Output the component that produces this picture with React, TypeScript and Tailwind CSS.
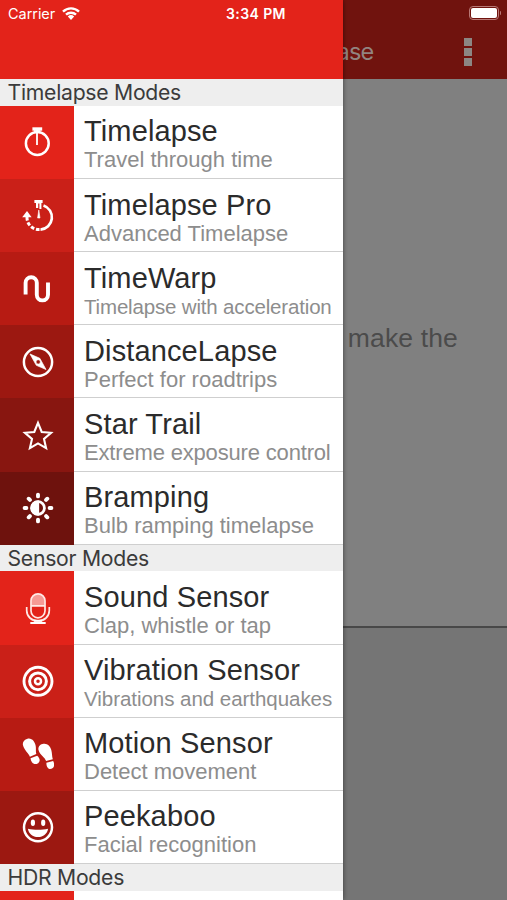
import type { ReactNode } from "react";

type Mode = {
  title: string;
  subtitle: string;
  tile: string;
  subtitleClass?: string;
  icon: ReactNode;
};

function Glyph({ children }: { children: ReactNode }) {
  return (
    <svg viewBox="0 0 32 32" className="size-8" fill="none" stroke="#fff" strokeWidth="2.3">
      {children}
    </svg>
  );
}

const stopwatch = (
  <Glyph>
    <circle cx="15.3" cy="17.5" r="11.4" strokeWidth="2.5" />
    <path d="M15.3 3.5v3M15 7v12" strokeWidth="1.8" />
    <path d="M10.4 1.3h9.8v3.4h-9.8z" fill="#fff" stroke="none" />
    <path d="M12 4.9h6.5" strokeWidth="1.5" />
  </Glyph>
);

const stopwatchPro = (
  <Glyph>
    <path d="M21.5 5.5A12.4 12.4 0 0 1 18.5 29.6" strokeWidth="2.7" />
    <path d="M17.5 29.6A12 12 0 0 1 5 17" strokeWidth="3" strokeDasharray="3.6 1.8" />
    <path d="M.2 17.2 5 11l4.6 6.2z" fill="#fff" stroke="none" />
    <path d="M12.4 0h8.2v3h-1.2v6h-2V3.5h-1.2V8H14V3h-1.6z" fill="#fff" stroke="none" />
    <path d="m16.8 10 1.2 8h-2.4z" fill="#fff" stroke="#fff" strokeWidth=".6" />
  </Glyph>
);

const wave = (
  <Glyph>
    <path d="M3.6 21.5V9.8a5.6 5.6 0 0 1 11.2 0v12a5.6 5.6 0 0 0 11.2 0V9.500" strokeWidth="3.9" />
  </Glyph>
);

const compass = (
  <Glyph>
    <circle cx="16" cy="16" r="14.1" strokeWidth="2.5" />
    <path
      d="m8 8 9.8 4.3L24 23.5l-9.7-4.2zM16.2 13.7a2.2 2.2 0 1 0 0 4.4 2.2 2.2 0 0 0 0-4.4z"
      fill="#fff"
      fillRule="evenodd"
      stroke="#fff"
      strokeWidth=".7"
    />
  </Glyph>
);

const star = (
  <Glyph>
    <path
      d="m16 3.8 3.7 9.2 9.4.8-7.1 6.2 2.1 9.2-8.1-4.8-8.1 4.8L10 20l-7.1-6.2 9.4-.8z"
      strokeWidth="2.1"
    />
  </Glyph>
);

const brightness = (
  <Glyph>
    <circle cx="16" cy="16" r="6.4" strokeWidth="2.8" />
    <path d="M16 9.6a6.4 6.4 0 0 0 0 12.8z" fill="#fff" />
    <path
      d="M16 2.6v1.8M16 27.6v1.8M2.600 16h1.800M27.600 16h1.800M6.700 6.700l1.200 1.200M24.100 24.100l1.200 1.200M6.700 25.300l1.200-1.200M24.100 7.900l1.200-1.200"
      strokeWidth="3.9"
      strokeLinecap="round"
    />
  </Glyph>
);

const microphone = (
  <Glyph>
    <path d="M9.3 14V8.8a6.700 6.700 0 0 1 13.400 0V14z" fill="#f69a95" stroke="none" />
    <rect x="9" y="1.8" width="14" height="24" rx="7" strokeWidth="1.7" stroke="#ffe9e6" />
    <path
      d="M9 13.800h14M4.700 15v3.500c0 6 5 10.500 11.300 10.500s11.300-4.500 11.300-10.500V15"
      strokeWidth="1.7"
      stroke="#ffe9e6"
    />
    <path d="M8.300 31h15.400M12 28.800h8" strokeWidth="2" />
  </Glyph>
);

const target = (
  <Glyph>
    <circle cx="16" cy="16.3" r="14" strokeWidth="2.9" />
    <circle cx="16" cy="16.3" r="8.4" strokeWidth="3" />
    <circle cx="16" cy="16.3" r="3" strokeWidth="2.5" />
  </Glyph>
);

const footprints = (
  <Glyph>
    <g fill="#fff" stroke="none">
      <path d="M5.500.8c4.200-1.200 7.500 3 8.200 7.200.5 3.200-.2 5 .6 8.100l-6.400 2.600C6.400 14.700 2.200 12.200 1 7.200.2 4.400 2.200 1.500 5.500.8z" />
      <path d="m8.500 20.200 6.700-2.400c2.800 2.400 3.300 5.600.9 7.400-3.400 2.200-7 .1-7.600-5z" />
      <path d="M20.500 6c4.300-1.300 7.700 1.800 8.800 6.100.9 3.400.6 6.400 1.500 9.100l-6.700 1.800c-1.200-4-6.200-6-7.500-10.800C15.800 9.300 17.500 6.700 20.500 6z" />
      <path d="m24.400 24.700 6.700-1.600c2 3.400 1 6.900-1.600 7.700-2.700.8-5.300-1.500-5.100-6.100z" />
    </g>
  </Glyph>
);

const smiley = (
  <Glyph>
    <circle cx="16" cy="16.3" r="14" strokeWidth="2.5" />
    <g fill="#fff" stroke="none">
      <ellipse cx="10.9" cy="11.8" rx="2.1" ry="3.2" />
      <ellipse cx="21.2" cy="11.8" rx="2.1" ry="3.2" />
      <path d="M5.900 17.700c6 1.500 14.200 1.500 20.200 0-.8 5-4.800 8.300-10.100 8.300s-9.300-3.300-10.100-8.300z" />
    </g>
  </Glyph>
);

const timelapseModes: Mode[] = [
  { title: "Timelapse", subtitle: "Travel through time", tile: "bg-[#e3231a]", icon: stopwatch },
  { title: "Timelapse Pro", subtitle: "Advanced Timelapse", tile: "bg-[#ca2018]", icon: stopwatchPro },
  {
    title: "TimeWarp",
    subtitle: "Timelapse with acceleration",
    tile: "bg-[#b71b13]",
    subtitleClass: "text-[20.5px] tracking-[-0.17px]",
    icon: wave,
  },
  { title: "DistanceLapse", subtitle: "Perfect for roadtrips", tile: "bg-[#9c1811]", icon: compass },
  {
    title: "Star Trail",
    subtitle: "Extreme exposure control",
    tile: "bg-[#881610]",
    subtitleClass: "text-[22px] tracking-[-0.17px]",
    icon: star,
  },
  { title: "Bramping", subtitle: "Bulb ramping timelapse", tile: "bg-[#6e120d]", icon: brightness },
];

const sensorModes: Mode[] = [
  { title: "Sound Sensor", subtitle: "Clap, whistle or tap", tile: "bg-[#e3231a]", icon: microphone },
  {
    title: "Vibration Sensor",
    subtitle: "Vibrations and earthquakes",
    tile: "bg-[#ca2018]",
    subtitleClass: "text-[20.5px] tracking-[-0.04px]",
    icon: target,
  },
  { title: "Motion Sensor", subtitle: "Detect movement", tile: "bg-[#b71b13]", icon: footprints },
  { title: "Peekaboo", subtitle: "Facial recognition", tile: "bg-[#9c1811]", icon: smiley },
];

function SectionHeader({ children }: { children: ReactNode }) {
  return (
    <h2 className="h-[26.8px] shrink-0 bg-[#eee] pl-[7.5px] font-[Inter,sans-serif] text-[21.2px] leading-[26px] tracking-[-0.27px] text-[#3b3b3b]">
      {children}
    </h2>
  );
}

function ModeRow({ mode }: { mode: Mode }) {
  return (
    <li className="flex h-[73.15px]">
      <div className={`flex w-[74px] shrink-0 items-center justify-center pl-[2px] ${mode.tile}`}>
        {mode.icon}
      </div>
      <div className="flex-1 border-b border-[#cfcfcf] pt-[9.6px] pl-[10px] whitespace-nowrap">
        <div className="h-[32px] text-[29px] leading-[32px] tracking-[0.13px] text-[#2b2b2b]">{mode.title}</div>
        <div className={`h-[25px] leading-[25px] text-[#8d8d8d] ${mode.subtitleClass ?? "text-[22px]"}`}>
          {mode.subtitle}
        </div>
      </div>
    </li>
  );
}

function StatusBar() {
  return (
    <div className="absolute inset-x-0 top-0 flex h-7 items-center font-[Inter,sans-serif] text-white">
      <span className="ml-[8px] w-[54px] text-[14.5px] tracking-[-0.05px]">Carrier</span>
      <svg viewBox="0 0 18 13" className="mb-[2px] h-[13px] w-[18px]" fill="none" stroke="#fff" strokeWidth="2.4">
        <path d="M1 4.600a11.500 11.500 0 0 1 16 0M4 7.700a7.200 7.200 0 0 1 10 0" />
        <path d="m5.800 9.600 3.200 3.300 3.200-3.300a4.700 4.700 0 0 0-6.400 0z" fill="#fff" stroke="none" />
      </svg>
      <span className="mb-px ml-[146px] text-[14px] font-semibold tracking-[0.4px]">3:34 PM</span>
      <div className="mr-[6px] mb-[2px] ml-auto flex items-center gap-px">
        <div className="h-[14px] w-[30px] rounded-[4px] border border-[#b87875] p-px">
          <div className="h-full rounded-[2px] bg-white" />
        </div>
        <div className="h-[4px] w-[1.5px] rounded-r bg-[#b87875]" />
      </div>
    </div>
  );
}

export default function App() {
  return (
    <div className="relative h-[900px] w-full overflow-hidden bg-[#808080] font-['Liberation_Sans',Arial,sans-serif]">
      <main className="flex h-full flex-col">
        <header className="flex h-[79px] shrink-0 items-end justify-end bg-[#70130e] pr-[35.5px] pb-[13px] font-[Inter,sans-serif] text-[#928480]">
          <span className="mr-[90px] text-[23.5px] leading-[28px] tracking-[-0.8px]">ase</span>
          <div className="flex flex-col gap-[2px]">
            <i className="size-2 bg-[#8c8683]" />
            <i className="size-2 bg-[#8c8683]" />
            <i className="size-2 bg-[#8c8683]" />
          </div>
        </header>
        <section className="flex h-[549px] shrink-0 items-start justify-end border-b-2 border-[#484848] pt-[244px] pr-[49px]">
          <p className="text-[26.5px] leading-[30px] tracking-[0.15px] text-[#4b4b4b]">make the</p>
        </section>
        <section className="flex-1 bg-[#757575]" />
      </main>

      <aside className="absolute inset-y-0 left-0 flex w-[343px] flex-col bg-white shadow-[0_0_5px_rgba(0,0,0,0.5)]">
        <div className="h-[79px] shrink-0 bg-[#e3231a]" />
        <SectionHeader>Timelapse Modes</SectionHeader>
        <ul>
          {timelapseModes.map((mode) => (
            <ModeRow key={mode.title} mode={mode} />
          ))}
        </ul>
        <SectionHeader>Sensor Modes</SectionHeader>
        <ul>
          {sensorModes.map((mode) => (
            <ModeRow key={mode.title} mode={mode} />
          ))}
        </ul>
        <SectionHeader>HDR Modes</SectionHeader>
        <div className="w-[74px] flex-1 bg-[#e3231a]" />
      </aside>

      <StatusBar />
    </div>
  );
}
